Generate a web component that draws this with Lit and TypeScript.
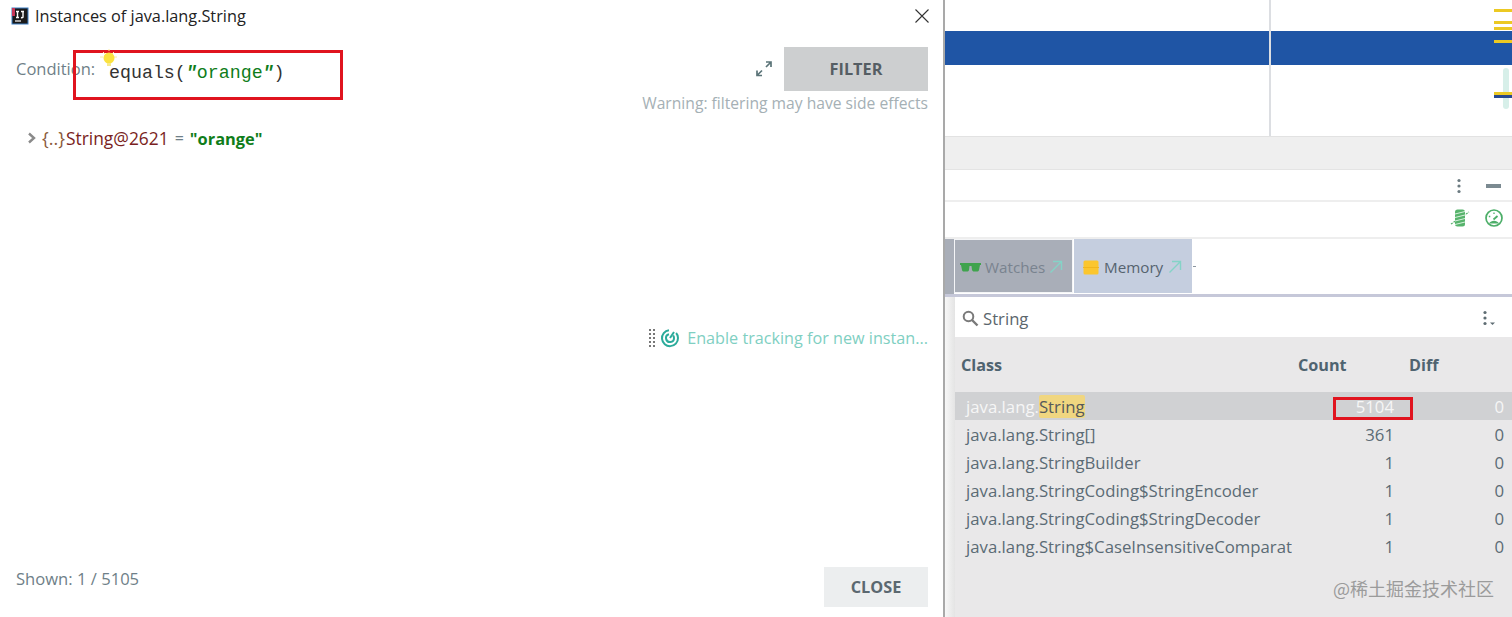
import { LitElement, html, css, svg } from "lit";
import { customElement } from "lit/decorators.js";

const rows = [
  { name: "java.lang.String[]", count: "361" },
  { name: "java.lang.StringBuilder", count: "1" },
  { name: "java.lang.StringCoding$StringEncoder", count: "1" },
  { name: "java.lang.StringCoding$StringDecoder", count: "1" },
  { name: "java.lang.String$CaseInsensitiveComparator", count: "1" },
];

const icon = (w: number, h: number, body: unknown) =>
  html`<svg width=${w} height=${h} viewBox="0 0 ${w} ${h}" fill="none">${body}</svg>`;

@customElement("app-root")
export class AppRoot extends LitElement {
  static styles = css`
    :host {
      display: flex;
      height: 617px;
      width: 1512px;
      overflow: hidden;
      position: relative;
      background: #fff;
      font-family: "Open Sans", "Noto Sans", sans-serif;
      color: #4c5a63;
    }

    /* instances dialog */
    .dialog {
      width: 945px;
      flex: none;
      display: flex;
      flex-direction: column;
      box-sizing: border-box;
      border-right: 2px solid #a9a9a9;
    }
    .title {
      height: 33px;
      box-sizing: border-box;
      display: flex;
      align-items: center;
      padding: 0 13px 2px 11px;
      gap: 6px;
      color: #222;
      font-size: 16.3px;
    }
    .title .grow {
      flex: 1;
    }
    .condition {
      height: 72px;
      padding: 14px 15px 0 16px;
      display: flex;
      position: relative;
    }
    .condition .label {
      font-size: 16.5px;
      color: #6f7f88;
      width: 93px;
      padding-top: 11px;
      line-height: 22px;
    }
    .condition .code {
      font-family: "Liberation Mono", monospace;
      font-size: 18.3px;
      color: #333;
      padding-top: 14px;
      line-height: 24px;
      flex: 1;
    }
    .code .str {
      color: #0f7d1a;
    }
    .code i {
      font-style: italic;
      font-weight: bold;
    }
    .filter-box {
      display: flex;
      flex-direction: column;
      align-items: flex-end;
    }
    .filter-top {
      display: flex;
      align-items: center;
      gap: 11px;
    }
    .filter-btn {
      width: 144px;
      height: 44px;
      background: #cdcfd0;
      color: #555e64;
      font-weight: 700;
      font-size: 16.3px;
      display: flex;
      align-items: center;
      justify-content: center;
    }
    .warn {
      margin-top: 2px;
      font-size: 15.65px;
      color: #a5b0b5;
      line-height: 20px;
      white-space: nowrap;
    }
    .tree {
      padding: 7px 0 0 27px;
      display: flex;
      align-items: center;
      height: 24px;
      font-size: 17.4px;
      white-space: nowrap;
    }
    .tree .brace {
      color: #8b5a3a;
      font-size: 18px;
      margin-left: 5px;
    }
    .tree .ref {
      color: #7a1f22;
      margin-left: 1px;
    }
    .tree .eq {
      color: #6f7f88;
      margin: 0 6px;
      font-size: 16px;
    }
    .tree .val {
      color: #0f7d1a;
      font-weight: 700;
      font-size: 16.4px;
    }
    .tracking {
      flex: 1;
      display: flex;
      justify-content: flex-end;
      align-items: flex-start;
      gap: 7px;
      padding: 176px 15px 0 0;
      font-size: 16.2px;
      color: #80cfc2;
      line-height: 24px;
      white-space: nowrap;
    }
    .tracking svg {
      margin-top: 2px;
    }
    .tracking svg:first-child {
      margin-right: -3px;
    }
    .footer {
      height: 50px;
      display: flex;
      align-items: flex-start;
      justify-content: space-between;
      padding: 0 15px 0 16px;
    }
    .shown {
      font-size: 16.6px;
      color: #6f7f88;
      line-height: 24px;
    }
    .close-btn {
      width: 104px;
      height: 40px;
      background: #eceeef;
      color: #5b6870;
      font-weight: 700;
      font-size: 16.3px;
      display: flex;
      align-items: center;
      justify-content: center;
    }

    /* ide panel */
    .ide {
      flex: 1;
      min-width: 0;
      display: flex;
      flex-direction: column;
    }
    .chart {
      height: 137px;
      flex: none;
      position: relative;
      padding-top: 31px;
      box-sizing: border-box;
      border-bottom: 1px solid #e2e2e2;
    }
    .band {
      height: 34px;
      background: #1f55a5;
    }
    .vline {
      position: absolute;
      left: 324px;
      top: 0;
      bottom: 0;
      width: 2px;
      background: #dcdee2;
    }
    .mark {
      position: absolute;
      left: 549px;
      right: 0;
      height: 3px;
      background: #ecc923;
    }
    .thumb {
      position: absolute;
      left: 558px;
      top: 68px;
      width: 6px;
      height: 41px;
      border-radius: 3px;
      background: #d7efe9;
    }
    .stripe {
      height: 33px;
      box-sizing: border-box;
      flex: none;
      background: #efefef;
      border-bottom: 1px solid #e4e4e4;
    }
    .bar {
      flex: none;
      display: flex;
      justify-content: flex-end;
      align-items: center;
      border-bottom: 2px solid #eeeeee;
      box-sizing: border-box;
    }
    .bar.menu {
      height: 32px;
      padding: 2px 11px 0 0;
      gap: 24px;
    }
    .bar.status {
      height: 37px;
      padding: 0 9px 3px 0;
      gap: 15px;
    }
    .body {
      flex: 1;
      min-height: 0;
      display: flex;
    }
    .edge {
      width: 10px;
      flex: none;
      background: linear-gradient(90deg, #f7f7f7, #e4e4e4);
    }
    .main {
      flex: 1;
      min-width: 0;
      display: flex;
      flex-direction: column;
    }
    .tabs {
      height: 58px;
      flex: none;
      display: flex;
      align-items: flex-start;
      gap: 1px;
      border-bottom: 3px solid #c6c8d9;
      box-sizing: border-box;
      margin-left: -10px;
      padding-left: 9px;
      font-size: 15.2px;
      background: linear-gradient(90deg, #a9aeb8 9px, #fff 9px);
    }
    .tab {
      height: 54px;
      box-sizing: border-box;
      display: flex;
      align-items: center;
      padding: 2px 0 0 5px;
      gap: 4px;
    }
    .tab.watches {
      width: 119px;
      background: #a9aeb8;
      border: 1px solid #f4f5f7;
      color: #79838f;
    }
    .tab.memory {
      width: 118px;
      background: #c5cedf;
      color: #56636f;
      padding-left: 9px;
      gap: 5px;
    }
    .tick {
      width: 3px;
      height: 1px;
      margin-top: 27px;
      background: #8c96a0;
    }
    .search {
      height: 40px;
      box-sizing: border-box;
      flex: none;
      display: flex;
      align-items: center;
      padding: 2px 16px 0 7px;
      gap: 4px;
      font-size: 16.7px;
      color: #5b666c;
    }
    .search .grow {
      flex: 1;
    }
    .table {
      flex: 1;
      background: #e9e8e9;
      font-size: 16.75px;
      color: #5b6b75;
    }
    .head {
      height: 55px;
      display: grid;
      grid-template-columns: 337px 111px 1fr;
      align-items: center;
      padding-left: 6px;
      box-sizing: border-box;
      font-weight: 700;
      font-size: 16.2px;
      color: #4f6370;
    }
    .row {
      height: 28px;
      box-sizing: border-box;
      display: grid;
      grid-template-columns: 337px 102px 1fr;
      align-items: center;
      padding: 1px 8px 0 0;
      line-height: 27px;
    }
    .row .name {
      padding-left: 11px;
      overflow: hidden;
      white-space: nowrap;
    }
    .row .num {
      text-align: right;
    }
    .row.selected {
      background: #d0d1d3;
      color: #f6f6f6;
    }
    .hit {
      background: #f0d680;
      color: #55595b;
      border-radius: 2px;
    }

    /* annotations laid over the screenshot */
    .redbox {
      position: absolute;
      border: 3px solid #e0141f;
      box-sizing: border-box;
    }
    .redbox.editor {
      left: 73px;
      top: 50px;
      width: 270px;
      height: 50px;
    }
    .redbox.count {
      left: 1333px;
      top: 397px;
      width: 80px;
      height: 23px;
    }
    .bulb {
      position: absolute;
      left: 99px;
      top: 49px;
    }
    .watermark {
      position: absolute;
      right: 18px;
      top: 576px;
      font-family: "Noto Sans CJK SC", "Noto Sans", sans-serif;
      font-size: 18px;
      line-height: 24px;
      color: #9b9b9b;
      white-space: nowrap;
    }
  `;

  private ideaIcon() {
    return icon(
      18,
      18,
      svg`<rect x="1" y="1" width="16" height="16" fill="#1a1a1a" stroke="#3d7fc4" stroke-width="1"/>
        <rect x="1" y="1" width="3" height="8" fill="#c8385a"/>
        <path d="M5 4.500h3M6.500 4.500v6M5 10.500h3M10 4.500h3M12 4.500v5.500c0 .8-1 .8-2 .5" stroke="#fff" stroke-width="1.400"/>
        <path d="M4 14h6" stroke="#fff" stroke-width="1.200"/>`,
    );
  }

  private closeIcon() {
    return icon(
      16,
      16,
      svg`<path d="M1.500 1.500l13 13M14.500 1.500l-13 13" stroke="#333" stroke-width="1.100"/>`,
    );
  }

  private expandIcon() {
    return icon(
      18,
      18,
      svg`<path d="M2 15.500L7 10.500M11 7l5-5M11 2h5v5M2 10.500v5h5" stroke="#5b7478" stroke-width="1.700"/>`,
    );
  }

  private chevron() {
    return icon(
      10,
      12,
      svg`<path d="M2 1.500L7 6 2 10.500" stroke="#8a8a8a" stroke-width="2.400"/>`,
    );
  }

  private trackingIcon() {
    return html`
      ${icon(
        8,
        20,
        svg`<g fill="#777"><rect x="1" y="1" width="2" height="2"/><rect x="5" y="1" width="2" height="2"/>
          <rect x="1" y="5" width="2" height="2"/><rect x="5" y="5" width="2" height="2"/>
          <rect x="1" y="9" width="2" height="2"/><rect x="5" y="9" width="2" height="2"/>
          <rect x="1" y="13" width="2" height="2"/><rect x="5" y="13" width="2" height="2"/>
          <rect x="1" y="17" width="2" height="2"/><rect x="5" y="17" width="2" height="2"/></g>`,
      )}
      ${icon(
        20,
        20,
        svg`<g stroke="#2bab9b" stroke-width="2"><path d="M9 2.200A8 8 0 1 0 18 10c0-2-.7-3.700-1.900-5"/>
          <path d="M9 6.200A4 4 0 1 0 14 10c0-1-.3-1.800-.9-2.500"/><path d="M10 10l4-6"/></g>`,
      )}
    `;
  }

  private dotsIcon() {
    return icon(
      6,
      16,
      svg`<g fill="#6b7a80"><circle cx="3" cy="2.500" r="1.600"/><circle cx="3" cy="8" r="1.600"/><circle cx="3" cy="13.500" r="1.600"/></g>`,
    );
  }

  private threadIcon() {
    return icon(
      20,
      20,
      svg`<path d="M1 16L19 4" stroke="#57b36c" stroke-width="1.200" stroke-dasharray="2 1"/>
        <rect x="5" y="1.500" width="10" height="17" rx="2.500" fill="#57b36c"/>
        <path d="M5 6l10-2.500M5 9.500l10-2.500M5 13l10-2.500M5 16.500l10-2.500" stroke="#d8f0dc" stroke-width="1"/>`,
    );
  }

  private gaugeIcon() {
    return icon(
      18,
      18,
      svg`<circle cx="9" cy="9" r="8" stroke="#4cae68" stroke-width="1.700"/>
        <path d="M4 14.500a6 6 0 0 1 10 0z" fill="#4cae68"/>
        <path d="M8.500 10.500l4-3.500" stroke="#4cae68" stroke-width="1.800"/>
        <path d="M3.800 7.500h1.500M9 3.500v1.500" stroke="#4cae68" stroke-width="1.300"/>`,
    );
  }

  private glassesIcon() {
    return icon(
      21,
      10,
      svg`<path d="M0 1h21v2h-1l-1 5c-.3 1-1 1.500-2 1.500h-3c-1 0-1.700-.7-2-1.500L11.500 4h-2L9 8c-.3 1-1 1.500-2 1.500H4c-1 0-1.700-.5-2-1.500L1 3H0z" fill="#3fa34d"/>`,
    );
  }

  private memoryIcon() {
    return icon(
      16,
      15,
      svg`<rect x="0.500" y="0.500" width="15" height="14" rx="1.500" fill="#fbc62e"/>
        <path d="M0 7.500h16" stroke="#f2b61d" stroke-width="1"/>`,
    );
  }

  private arrowIcon() {
    return icon(
      14,
      14,
      svg`<path d="M1.500 12.500L12 2M4 1.500h8.500V10" stroke="#85d3c7" stroke-width="1.400"/>`,
    );
  }

  private searchIcon() {
    return icon(
      17,
      17,
      svg`<circle cx="6.500" cy="6.500" r="4.800" stroke="#7a7a7a" stroke-width="2"/>
        <path d="M10 10l5.500 5.500" stroke="#7a7a7a" stroke-width="2.400"/>`,
    );
  }

  private filterMenuIcon() {
    return icon(
      14,
      16,
      svg`<g fill="#5f6d73"><circle cx="3" cy="2.500" r="1.600"/><circle cx="3" cy="8" r="1.600"/><circle cx="3" cy="13.500" r="1.600"/>
        <path d="M8 12.500h5l-2.500 2.500z"/></g>`,
    );
  }

  private renderDialog() {
    return html`
      <section class="dialog">
        <div class="title">
          ${this.ideaIcon()}
          <span>Instances of java.lang.String</span>
          <span class="grow"></span>
          ${this.closeIcon()}
        </div>
        <div class="condition">
          <span class="label">Condition:</span>
          <span class="code"
            >equals(<span class="str"><i>"</i>orange<i>"</i></span>)</span
          >
          <div class="filter-box">
            <div class="filter-top">
              ${this.expandIcon()}
              <div class="filter-btn">FILTER</div>
            </div>
            <div class="warn">Warning: filtering may have side effects</div>
          </div>
        </div>
        <div class="tree">
          ${this.chevron()}
          <span class="brace">{..}</span>
          <span class="ref">String@2621</span>
          <span class="eq">=</span>
          <span class="val">"orange"</span>
        </div>
        <div class="tracking">
          ${this.trackingIcon()}
          <span>Enable tracking for new instan...</span>
        </div>
        <div class="footer">
          <span class="shown">Shown: 1 / 5105</span>
          <div class="close-btn">CLOSE</div>
        </div>
      </section>
    `;
  }

  private renderIde() {
    return html`
      <section class="ide">
        <div class="chart">
          <div class="band"></div>
          <div class="vline"></div>
          ${[9, 21, 27, 40].map(
            (y) => html`<div class="mark" style="top:${y}px"></div>`,
          )}
          <div class="thumb"></div>
          <div class="mark" style="top:92px"></div>
          <div class="mark" style="top:95px;background:#27498f"></div>
        </div>
        <div class="stripe"></div>
        <div class="bar menu">
          ${this.dotsIcon()}
          <svg width="15" height="4"><rect width="15" height="4" fill="#7b8a91" /></svg>
        </div>
        <div class="bar status">${this.threadIcon()} ${this.gaugeIcon()}</div>
        <div class="body">
          <div class="edge"></div>
          <div class="main">
            <div class="tabs">
              <div class="tab watches">
                ${this.glassesIcon()}<span>Watches</span>${this.arrowIcon()}
              </div>
              <div class="tab memory">
                ${this.memoryIcon()}<span>Memory</span>${this.arrowIcon()}
              </div>
              <span class="tick"></span>
            </div>
            <div class="search">
              ${this.searchIcon()}<span>String</span>
              <span class="grow"></span>
              ${this.filterMenuIcon()}
            </div>
            <div class="table">
              <div class="head">
                <span>Class</span><span>Count</span><span>Diff</span>
              </div>
              <div class="row selected">
                <span class="name">java.lang.<span class="hit">String</span></span>
                <span class="num">5104</span>
                <span class="num">0</span>
              </div>
              ${rows.map(
                (r) => html`
                  <div class="row">
                    <span class="name">${r.name}</span>
                    <span class="num">${r.count}</span>
                    <span class="num">0</span>
                  </div>
                `,
              )}
            </div>
          </div>
        </div>
      </section>
    `;
  }

  render() {
    return html`
      ${this.renderDialog()} ${this.renderIde()}
      <div class="redbox editor"></div>
      <div class="redbox count"></div>
      <svg class="bulb" width="20" height="20" viewBox="0 0 20 20">
        <path
          d="M1 8h3M15 8h3M4 3l2 2M15 3l-2 2M10 0v2"
          stroke="#fbeea0"
          stroke-width="1"
        />
        <circle cx="10" cy="9" r="5.500" fill="#fbe23f" />
        <rect x="8" y="14" width="4" height="3" fill="#f7e98a" />
      </svg>
      <div class="watermark">@稀土掘金技术社区</div>
    `;
  }
}
